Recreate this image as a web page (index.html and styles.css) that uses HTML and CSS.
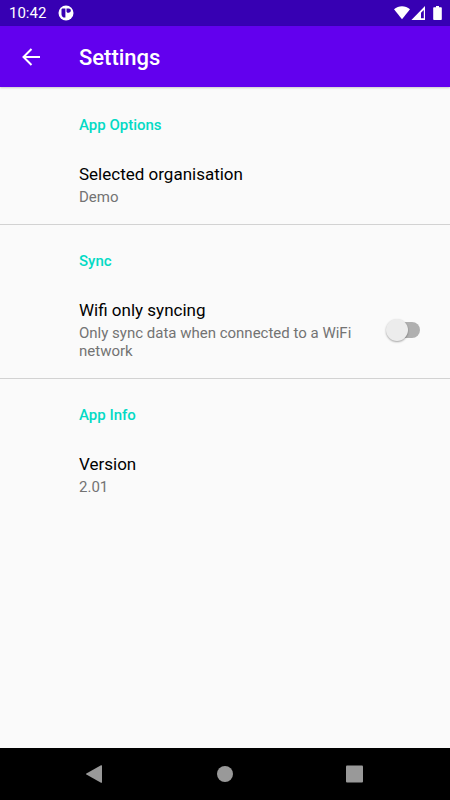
FILE: index.html
```html
<!DOCTYPE html>
<html lang="en">
<head>
<meta charset="utf-8">
<meta name="viewport" content="width=device-width, initial-scale=1">
<title>Settings</title>
<link rel="stylesheet" href="styles.css">
</head>
<body>
<div class="status">
  <span class="clock">10:42</span>
  <svg class="status-app" width="16" height="16" viewBox="0 0 16 16" aria-hidden="true">
    <circle cx="8" cy="8" r="7.5" fill="#fff"/>
    <path d="M4.200 3.500H7.400v9H5.500Q3.500 11.500 3.500 9.500V4.200zM8.500 3.500h2.300a2 2 0 0 1 0 4.200h-1.500l-.8-1z" fill="#3700b3"/>
  </svg>
  <svg class="status-icons" width="50" height="16" viewBox="0 0 50 16" fill="#fff" aria-hidden="true">
    <path d="M0 4.200C4.600 .300 11.400 .300 16 4.200L8 14.200z"/>
    <path fill-rule="evenodd" d="M31 1V15H17.400zM29.800 5L27 7.800V13.200H29.800z"/>
    <path d="M42 1h3V2.200H47q.8 0 .8 .8V14.200q0 .8-.8 .8h-7q-.8 0-.8-.8V3q0-.8 .8-.8h2z"/>
  </svg>
</div>
<header class="toolbar">
  <button class="back" type="button" aria-label="Navigate up">
    <svg width="18" height="18" viewBox="0 0 18 18" fill="none" stroke="#fff" stroke-width="2" aria-hidden="true">
      <path d="M18 9H1.500M9.500 1L1.500 9l8 8"/>
    </svg>
  </button>
  <h1 class="title">Settings</h1>
</header>
<main class="settings">
  <section class="group">
    <h2 class="category">App Options</h2>
    <div class="item">
      <div class="name">Selected organisation</div>
      <div class="summary">Demo</div>
    </div>
  </section>
  <section class="group">
    <h2 class="category">Sync</h2>
    <div class="item item-switch">
      <label class="text" for="wifi-only">
        <span class="name">Wifi only syncing</span>
        <span class="summary">Only sync data when connected to a WiFi network</span>
      </label>
      <input class="switch" id="wifi-only" type="checkbox" role="switch">
    </div>
  </section>
  <section class="group">
    <h2 class="category">App Info</h2>
    <div class="item">
      <div class="name">Version</div>
      <div class="summary">2.01</div>
    </div>
  </section>
</main>
<nav class="navbar" aria-label="System">
  <button type="button" aria-label="Back">
    <svg width="18" height="18" viewBox="0 0 18 18" fill="#999" aria-hidden="true"><path d="M15 .300Q16 -.200 16 .800V17.200q0 1-1 .500L.400 9.500q-.8-.5 0-1z"/></svg>
  </button>
  <button type="button" aria-label="Home">
    <svg width="18" height="18" viewBox="0 0 18 18" fill="#999" aria-hidden="true"><circle cx="9" cy="9" r="8"/></svg>
  </button>
  <button type="button" aria-label="Overview">
    <svg width="18" height="18" viewBox="0 0 18 18" fill="#999" aria-hidden="true"><rect x="0" y=".5" width="17" height="17" rx="1"/></svg>
  </button>
</nav>
</body>
</html>
```
FILE: styles.css
```css
* {
  box-sizing: border-box;
}

body {
  margin: 0;
  min-height: 100vh;
  display: flex;
  flex-direction: column;
  background: #fafafa;
  color: #000;
  font-family: Roboto, sans-serif;
}

h1,
h2 {
  margin: 0;
  font-weight: 500;
}

button {
  display: flex;
  align-items: center;
  justify-content: center;
  padding: 0;
  border: 0;
  background: none;
}

.status {
  display: flex;
  align-items: center;
  height: 26px;
  padding: 0 6px 0 9px;
  background: #3700b3;
  color: #fff;
}

.clock {
  font-size: 15px;
  line-height: 28px;
}

.status-app {
  margin-left: 12px;
}

.status-icons {
  margin-left: auto;
}

.toolbar {
  display: flex;
  align-items: center;
  height: 61px;
  background: #6200ee;
  color: #fff;
  box-shadow: 0 1px 2px rgba(0, 0, 0, 0.2);
}

.back {
  width: 61px;
  height: 61px;
  margin-right: 18px;
}

.title {
  padding-top: 2px;
  font-size: 22px;
  line-height: 26px;
}

.settings {
  flex: 1;
}

.group {
  padding: 28px 30px 18px 79px;
}

.group + .group {
  border-top: 1px solid #d2d2d2;
  padding-top: 26px;
}

.category {
  margin-bottom: 28px;
  color: #03dac5;
  font-size: 15px;
  line-height: 20px;
}

.item-switch {
  display: flex;
  align-items: center;
  justify-content: space-between;
  gap: 24px;
}

.name,
.summary {
  display: block;
}

.name {
  font-size: 17px;
  line-height: 22px;
}

.summary {
  margin-top: 3px;
  color: #737373;
  font-size: 15px;
  line-height: 18px;
}

.switch {
  appearance: none;
  flex: none;
  display: flex;
  align-items: center;
  width: 32px;
  height: 16px;
  margin: 0;
  background: #b0b0b0;
  border-radius: 8px;
}

.switch::before {
  content: "";
  flex: none;
  width: 22px;
  height: 22px;
  margin: 0 -2px;
  border-radius: 50%;
  background: #ececec;
  box-shadow: 0 1px 2px rgba(0, 0, 0, 0.35);
}

.switch:checked {
  justify-content: flex-end;
}

.navbar {
  display: flex;
  align-items: center;
  justify-content: center;
  gap: 82px;
  height: 52px;
  background: #000;
}

.navbar button {
  width: 48px;
  height: 52px;
}
```
